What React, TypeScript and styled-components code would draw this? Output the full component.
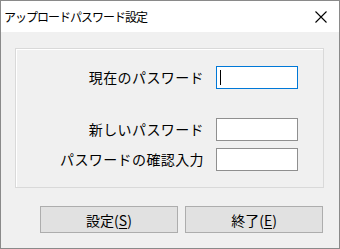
import styled, { createGlobalStyle } from 'styled-components';

const GlobalStyle = createGlobalStyle`
  html, body {
    margin: 0;
    padding: 0;
    background: #ffffff;
  }
  body {
    font-family: "Noto Sans CJK JP", "Noto Sans", sans-serif;
    color: #000;
  }
`;

const Window = styled.div`
  width: 340px;
  height: 249px;
  box-sizing: border-box;
  border: 1px solid #8a8a8a;
  display: flex;
  flex-direction: column;
  background: #f0f0f0;
`;

const TitleBar = styled.div`
  height: 31px;
  flex-shrink: 0;
  background: #ffffff;
  display: flex;
  align-items: center;
  justify-content: space-between;
  padding: 0 12px 0 3px;
`;

const Title = styled.span`
  font-size: 12px;
  letter-spacing: -1px;
  line-height: 1;
  padding-top: 1px;
`;

const CloseIcon = styled.svg`
  width: 12px;
  height: 12px;
  display: block;
`;

const Body = styled.div`
  flex: 1;
  display: flex;
  flex-direction: column;
  padding: 16px 15px 15px 14px;
  gap: 18px;
`;

const Group = styled.div`
  height: 140px;
  box-sizing: border-box;
  border: 1px solid #d9d9d9;
  box-shadow: inset 1px 1px 0 #ffffff;
  padding: 17px 25px 16px 0;
  display: flex;
  flex-direction: column;
`;

const Row = styled.div<{ $gapBefore: number }>`
  display: flex;
  justify-content: flex-end;
  align-items: center;
  gap: 12px;
  height: 23px;
  margin-top: ${(p) => p.$gapBefore}px;
`;

const Label = styled.span`
  font-size: 14px;
  letter-spacing: 0.4px;
  line-height: 23px;
  white-space: nowrap;
`;

const Field = styled.div<{ $focused?: boolean }>`
  width: 82px;
  height: 23px;
  box-sizing: border-box;
  background: #ffffff;
  border: 1px solid ${(p) => (p.$focused ? '#0078d7' : '#8f8f8f')};
  display: flex;
  align-items: center;
  padding-left: 3px;
`;

const Caret = styled.span`
  width: 1px;
  height: 15px;
  background: #000;
`;

const Buttons = styled.div`
  display: flex;
  justify-content: flex-end;
  gap: 7px;
  padding-right: 1px;
`;

const Button = styled.button`
  width: 138px;
  height: 27px;
  box-sizing: border-box;
  background: #e1e1e1;
  border: 1px solid #adadad;
  border-radius: 0;
  padding: 0;
  font-family: "Noto Sans CJK JP", "Noto Sans", sans-serif;
  font-size: 14px;
  color: #000;
  line-height: 1;
`;

const Key = styled.span`
  text-decoration: underline;
  text-underline-offset: 2px;
`;

const rows = [
  { label: '現在のパスワード', focused: true, gap: 0 },
  { label: '新しいパスワード', focused: false, gap: 29 },
  { label: 'パスワードの確認入力', focused: false, gap: 7 },
];

const App = () => {
  return (
    <>
      <GlobalStyle />
      <Window>
        <TitleBar>
          <Title>アップロードパスワード設定</Title>
          <CloseIcon viewBox="0 0 12 12">
            <path d="M0.5 0.5 L11.5 11.5 M11.5 0.5 L0.5 11.5" stroke="#000" strokeWidth="1.1" fill="none" />
          </CloseIcon>
        </TitleBar>
        <Body>
          <Group>
            {rows.map((row) => (
              <Row key={row.label} $gapBefore={row.gap}>
                <Label>{row.label}</Label>
                <Field $focused={row.focused}>{row.focused && <Caret />}</Field>
              </Row>
            ))}
          </Group>
          <Buttons>
            <Button>
              設定(<Key>S</Key>)
            </Button>
            <Button>
              終了(<Key>E</Key>)
            </Button>
          </Buttons>
        </Body>
      </Window>
    </>
  );
};

export default App;
